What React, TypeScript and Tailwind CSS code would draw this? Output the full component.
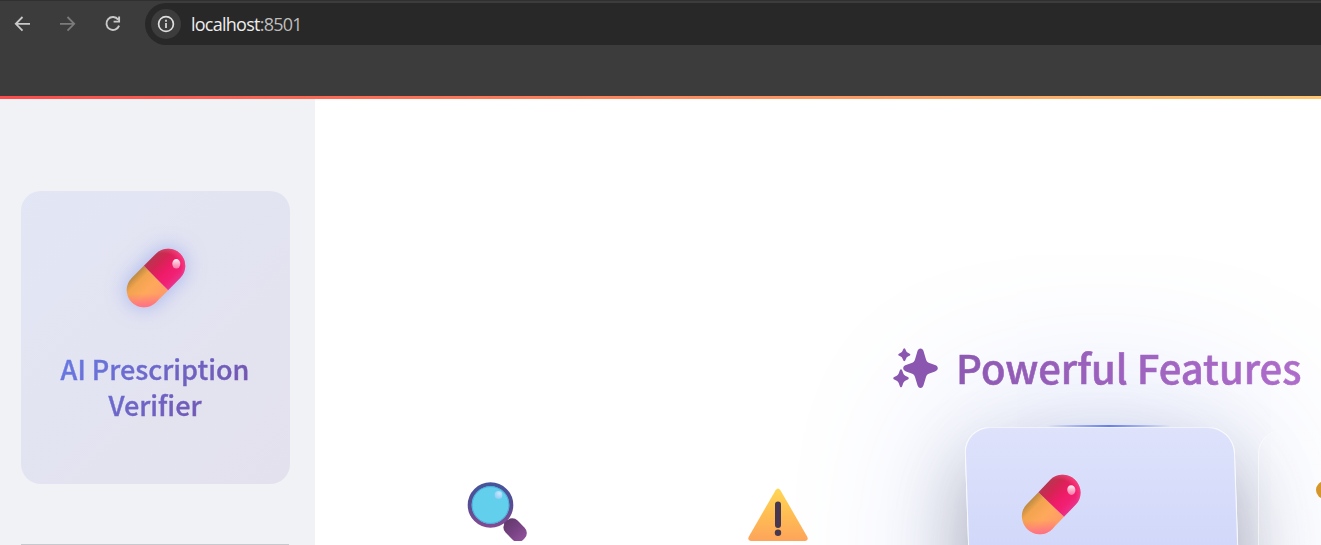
import { useId } from "react";

function Pill({ className = "" }: { className?: string }) {
  const id = useId();
  return (
    <svg viewBox="0 0 60 60" className={className}>
      <defs>
        <linearGradient id={id + "r"} x1="0" y1="0" x2="0" y2="1">
          <stop offset="0" stopColor="#b8354f" />
          <stop offset="0.25" stopColor="#d32553" />
          <stop offset="0.55" stopColor="#ee1b67" />
          <stop offset="0.8" stopColor="#f22073" />
          <stop offset="1" stopColor="#e9328a" />
        </linearGradient>
        <linearGradient id={id + "o"} x1="0" y1="0" x2="0" y2="1">
          <stop offset="0" stopColor="#bd8a42" />
          <stop offset="0.22" stopColor="#f2a44e" />
          <stop offset="0.6" stopColor="#ffa85c" />
          <stop offset="1" stopColor="#ff9a68" />
        </linearGradient>
        <linearGradient id={id + "p"} x1="0.5" y1="0" x2="0.5" y2="1">
          <stop offset="0.6" stopColor="#ff6f7d" stopOpacity="0" />
          <stop offset="1" stopColor="#ff6f8a" />
        </linearGradient>
        <radialGradient id={id + "e"} cx="0.3" cy="0.5" r="0.72">
          <stop offset="0.7" stopColor="#ff5c90" stopOpacity="0" />
          <stop offset="1" stopColor="#ff5c90" stopOpacity="0.6" />
        </radialGradient>
        <linearGradient id={id + "s"} x1="0" y1="0" x2="0" y2="1">
          <stop offset="0" stopColor="#fff" stopOpacity="0.95" />
          <stop offset="1" stopColor="#ffb8cf" stopOpacity="0.6" />
        </linearGradient>
      </defs>
      <g transform="rotate(-45 30 30)">
        <path d="M30 12.8H12.9A17.2 17.2 0 0 0 12.9 47.2H30Z" fill={`url(#${id}o)`} />
        <path d="M30 12.8H47.1A17.2 17.2 0 0 1 47.1 47.2H30Z" fill={`url(#${id}r)`} />
        <path d="M30 12.8H47.1A17.2 17.2 0 0 1 47.1 47.2H30Z" fill={`url(#${id}e)`} />
      </g>
      <circle cx="17.9" cy="42.1" r="17.2" fill={`url(#${id}p)`} />
      <ellipse cx="50.3" cy="15.8" rx="4" ry="4.8" fill={`url(#${id}s)`} />
    </svg>
  );
}

function Magnifier() {
  return (
    <svg viewBox="0 0 60 60" className="size-[60px]">
      <defs>
        <linearGradient id="mag-ring" x1="0" y1="0" x2="0" y2="1">
          <stop offset="0" stopColor="#46559b" />
          <stop offset="0.5" stopColor="#584c93" />
          <stop offset="1" stopColor="#824a92" />
        </linearGradient>
        <linearGradient id="mag-handle" x1="0" y1="0" x2="1" y2="0">
          <stop offset="0" stopColor="#623a6c" />
          <stop offset="0.5" stopColor="#784283" />
          <stop offset="1" stopColor="#8e5199" />
        </linearGradient>
        <radialGradient id="mag-shine" cx="0.6" cy="0.3" r="0.8">
          <stop offset="0" stopColor="#c5e8ff" />
          <stop offset="1" stopColor="#8dc9f2" />
        </radialGradient>
      </defs>
      <path d="M36 38 41 43" stroke="#61407f" strokeWidth="5" />
      <circle cx="23.5" cy="24" r="20.8" fill="#62cfec" stroke="url(#mag-ring)" strokeWidth="4" />
      <circle cx="23.5" cy="24" r="18.4" fill="none" stroke="#4ab0da" strokeWidth="1" />
      <rect x="35.6" y="40.6" width="25" height="17" rx="7.5" transform="rotate(45 48.1 49.1)" fill="url(#mag-handle)" />
      <circle cx="31.5" cy="14" r="3.9" fill="url(#mag-shine)" />
    </svg>
  );
}

function Warning() {
  return (
    <svg viewBox="0 0 60 60" className="size-[60px]">
      <defs>
        <linearGradient id="warn" x1="0" y1="0" x2="0" y2="1">
          <stop offset="0" stopColor="#ffd755" />
          <stop offset="0.5" stopColor="#ffbd53" />
          <stop offset="1" stopColor="#fda45b" />
        </linearGradient>
      </defs>
      <path
        d="M27.6 6.2Q30 2.6 32.4 6.2L59.1 52.4Q61 56.5 57.2 57H2.8Q-1 56.5 .9 52.4Z"
        fill="url(#warn)"
      />
      <path d="M30 20.5V41" stroke="#47384f" strokeWidth="6" strokeLinecap="round" />
      <circle cx="30" cy="48.8" r="3.2" fill="#47384f" />
    </svg>
  );
}

function Sparkles() {
  return (
    <svg viewBox="0 0 45 42" className="h-[42px] w-[45px]" fill="#8a56b0">
      <path d="M27.5 1.5C29 1.5 30 2.6 30.5 4.1L33 12.5C33.6 14.4 34.5 15.4 36.4 16L42 18C43.8 18.7 44.8 19.8 44.8 21.2S43.8 23.7 42 24.4L36.4 26.4C34.5 27 33.6 28 33 29.9L30.5 38.3C30 39.8 29 41 27.5 41S25 39.8 24.5 38.3L22 29.9C21.4 28 20.5 27 18.6 26.4L13 24.4C11.2 23.7 10.2 22.6 10.2 21.2S11.2 18.7 13 18L18.6 16C20.5 15.4 21.4 14.4 22 12.5L24.5 4.1C25 2.6 26 1.5 27.5 1.5Z" />
      <path d="M11.3 1.2Q12.2 1.2 12.7 3Q13.3 5.7 15.8 6.3Q17.4 6.9 17.4 7.7T15.8 9.1Q13.3 9.7 12.7 12.4Q12.2 14.2 11.3 14.2T9.9 12.4Q9.3 9.7 6.8 9.1Q5.2 8.5 5.2 7.7T6.8 6.3Q9.3 5.7 9.9 3Q10.4 1.2 11.3 1.2Z" />
      <path d="M8 22.2Q9 22.2 9.6 24.6Q10.4 28.7 13.8 29.6Q15.8 30.3 15.8 31.3T13.8 33Q10.4 33.9 9.6 38Q9 40.4 8 40.4T6.4 38Q5.6 33.9 2.2 33Q.2 32.3 .2 31.3T2.2 29.6Q5.6 28.7 6.4 24.6Q7 22.2 8 22.2Z" />
    </svg>
  );
}

function BrowserBar() {
  return (
    <header className="flex h-24 shrink-0 flex-col bg-[#3c3c3c]">
      <div className="flex h-[45px] items-start border-t border-[#303030] pt-0.5">
        <div className="flex h-[42px] w-[145px] items-center gap-[25px] pl-[13px]">
          <svg viewBox="0 0 20 20" className="size-5" fill="none" stroke="#c9c9c9" strokeWidth="1.8">
            <path d="M17 9.8H3M9.5 3 2.8 9.8l6.7 6.8" />
          </svg>
          <svg viewBox="0 0 20 20" className="size-5" fill="none" stroke="#7b7b7b" strokeWidth="1.8">
            <path d="M2 9.8h14M9.5 3l6.7 6.8-6.7 6.8" />
          </svg>
          <svg viewBox="0 0 20 20" className="size-5" fill="none" stroke="#c9c9c9" strokeWidth="1.9">
            <path d="M15.2 5.6A6.5 6.5 0 1 0 16.1 11.6M16.1 2.4V7.6H10.6" />
          </svg>
        </div>
        <div className="flex h-[42px] flex-1 items-center rounded-l-full bg-[#282828] pl-1.5">
          <span className="flex size-[30px] items-center justify-center rounded-full bg-[#3c3c3c]">
            <svg viewBox="0 0 18 18" className="size-[18px]" fill="none" stroke="#dfdfdf" strokeWidth="1.7">
              <circle cx="9" cy="9" r="7.4" />
              <path d="M9 8v5M9 4.8v1.9" />
            </svg>
          </span>
          <span className="ml-[10px] font-['Open_Sans',sans-serif] text-[18px] tracking-[-0.75px] text-[#ededed]">
            localhost<span className="text-[#bdbdbd]">:8501</span>
          </span>
        </div>
      </div>
    </header>
  );
}

function Sidebar() {
  return (
    <aside className="flex w-[315px] shrink-0 flex-col bg-[#f0f2f6] pl-[21px] pt-[92px]">
      <div className="flex h-[293px] w-[269px] shrink-0 flex-col items-center rounded-[20px] bg-linear-135/srgb from-[#667eea1a] to-[#764ba21a] pt-[57px]">
        <Pill className="size-[60px] drop-shadow-[0_0_10px_rgba(102,126,234,0.5)]" />
        <h3 className="mt-[43px] mr-px w-[229px] bg-linear-135/srgb from-[#667eea] to-[#764ba2] bg-clip-text text-center font-['Noto_Sans_CJK_SC',sans-serif] text-[27px] leading-9 font-medium text-transparent [-webkit-text-stroke:0.4px_transparent]">
          AI Prescription
          <br />
          Verifier
        </h3>
      </div>
      <hr className="mt-[60px] w-[268px] border-[#c7c9ce]" />
    </aside>
  );
}

function Features() {
  return (
    <main className="flex flex-1 flex-col overflow-hidden bg-white pt-[241px]">
      <div className="relative z-10 flex h-[55px] items-center gap-[18px] pl-[578px]">
        <Sparkles />
        <h2 className="bg-linear-to-r/srgb from-[#8d59b3] to-[#ae6ccb] bg-clip-text font-['Noto_Sans_CJK_SC',sans-serif] text-[40px] leading-[55px] font-medium whitespace-nowrap text-transparent [-webkit-text-stroke:0.6px_transparent]">
          Powerful Features
        </h2>
      </div>
      <div className="flex h-[400px] shrink-0 items-start pt-8">
        <div className="ml-[152px] mt-[54px] shrink-0">
          <Magnifier />
        </div>
        <div className="relative z-10 ml-[221px] mt-[57px] shrink-0">
          <Warning />
        </div>
        <div className="relative ml-[156px] h-[390px] w-[270px] shrink-0 origin-top-left skew-x-[2deg] rounded-[26px] border border-white/80 bg-linear-to-b/srgb from-[#dee2fb] to-[#b4c1f5] pl-[53px] pt-[46px] shadow-[0_40px_80px_rgba(0,0,0,0.3),0_0_170px_rgba(102,126,234,0.3)]">
          <span className="absolute -top-[3px] left-[82px] h-0.5 w-[124px] bg-linear-to-r from-transparent via-[#667eea] to-transparent" />
          <Pill className="size-[61px]" />
        </div>
        <div className="relative ml-[24px] mt-[3px] h-[360px] w-[270px] shrink-0 rounded-[24px] bg-linear-to-r from-white/15 to-white/40 pl-[57px] pt-[50px] shadow-[inset_1px_0_0_rgba(255,255,255,0.5)]">
          <svg viewBox="0 0 30 30" className="size-[30px]">
            <circle cx="10" cy="10" r="9" fill="#d5962a" />
          </svg>
        </div>
      </div>
    </main>
  );
}

export default function App() {
  return (
    <div className="flex h-[545px] w-[1321px] flex-col overflow-hidden bg-white">
      <BrowserBar />
      <div className="h-[3px] shrink-0 bg-linear-to-r/srgb from-[#ff4b4b] to-[#ffc76f]" />
      <div className="flex min-h-0 flex-1">
        <Sidebar />
        <Features />
      </div>
    </div>
  );
}
